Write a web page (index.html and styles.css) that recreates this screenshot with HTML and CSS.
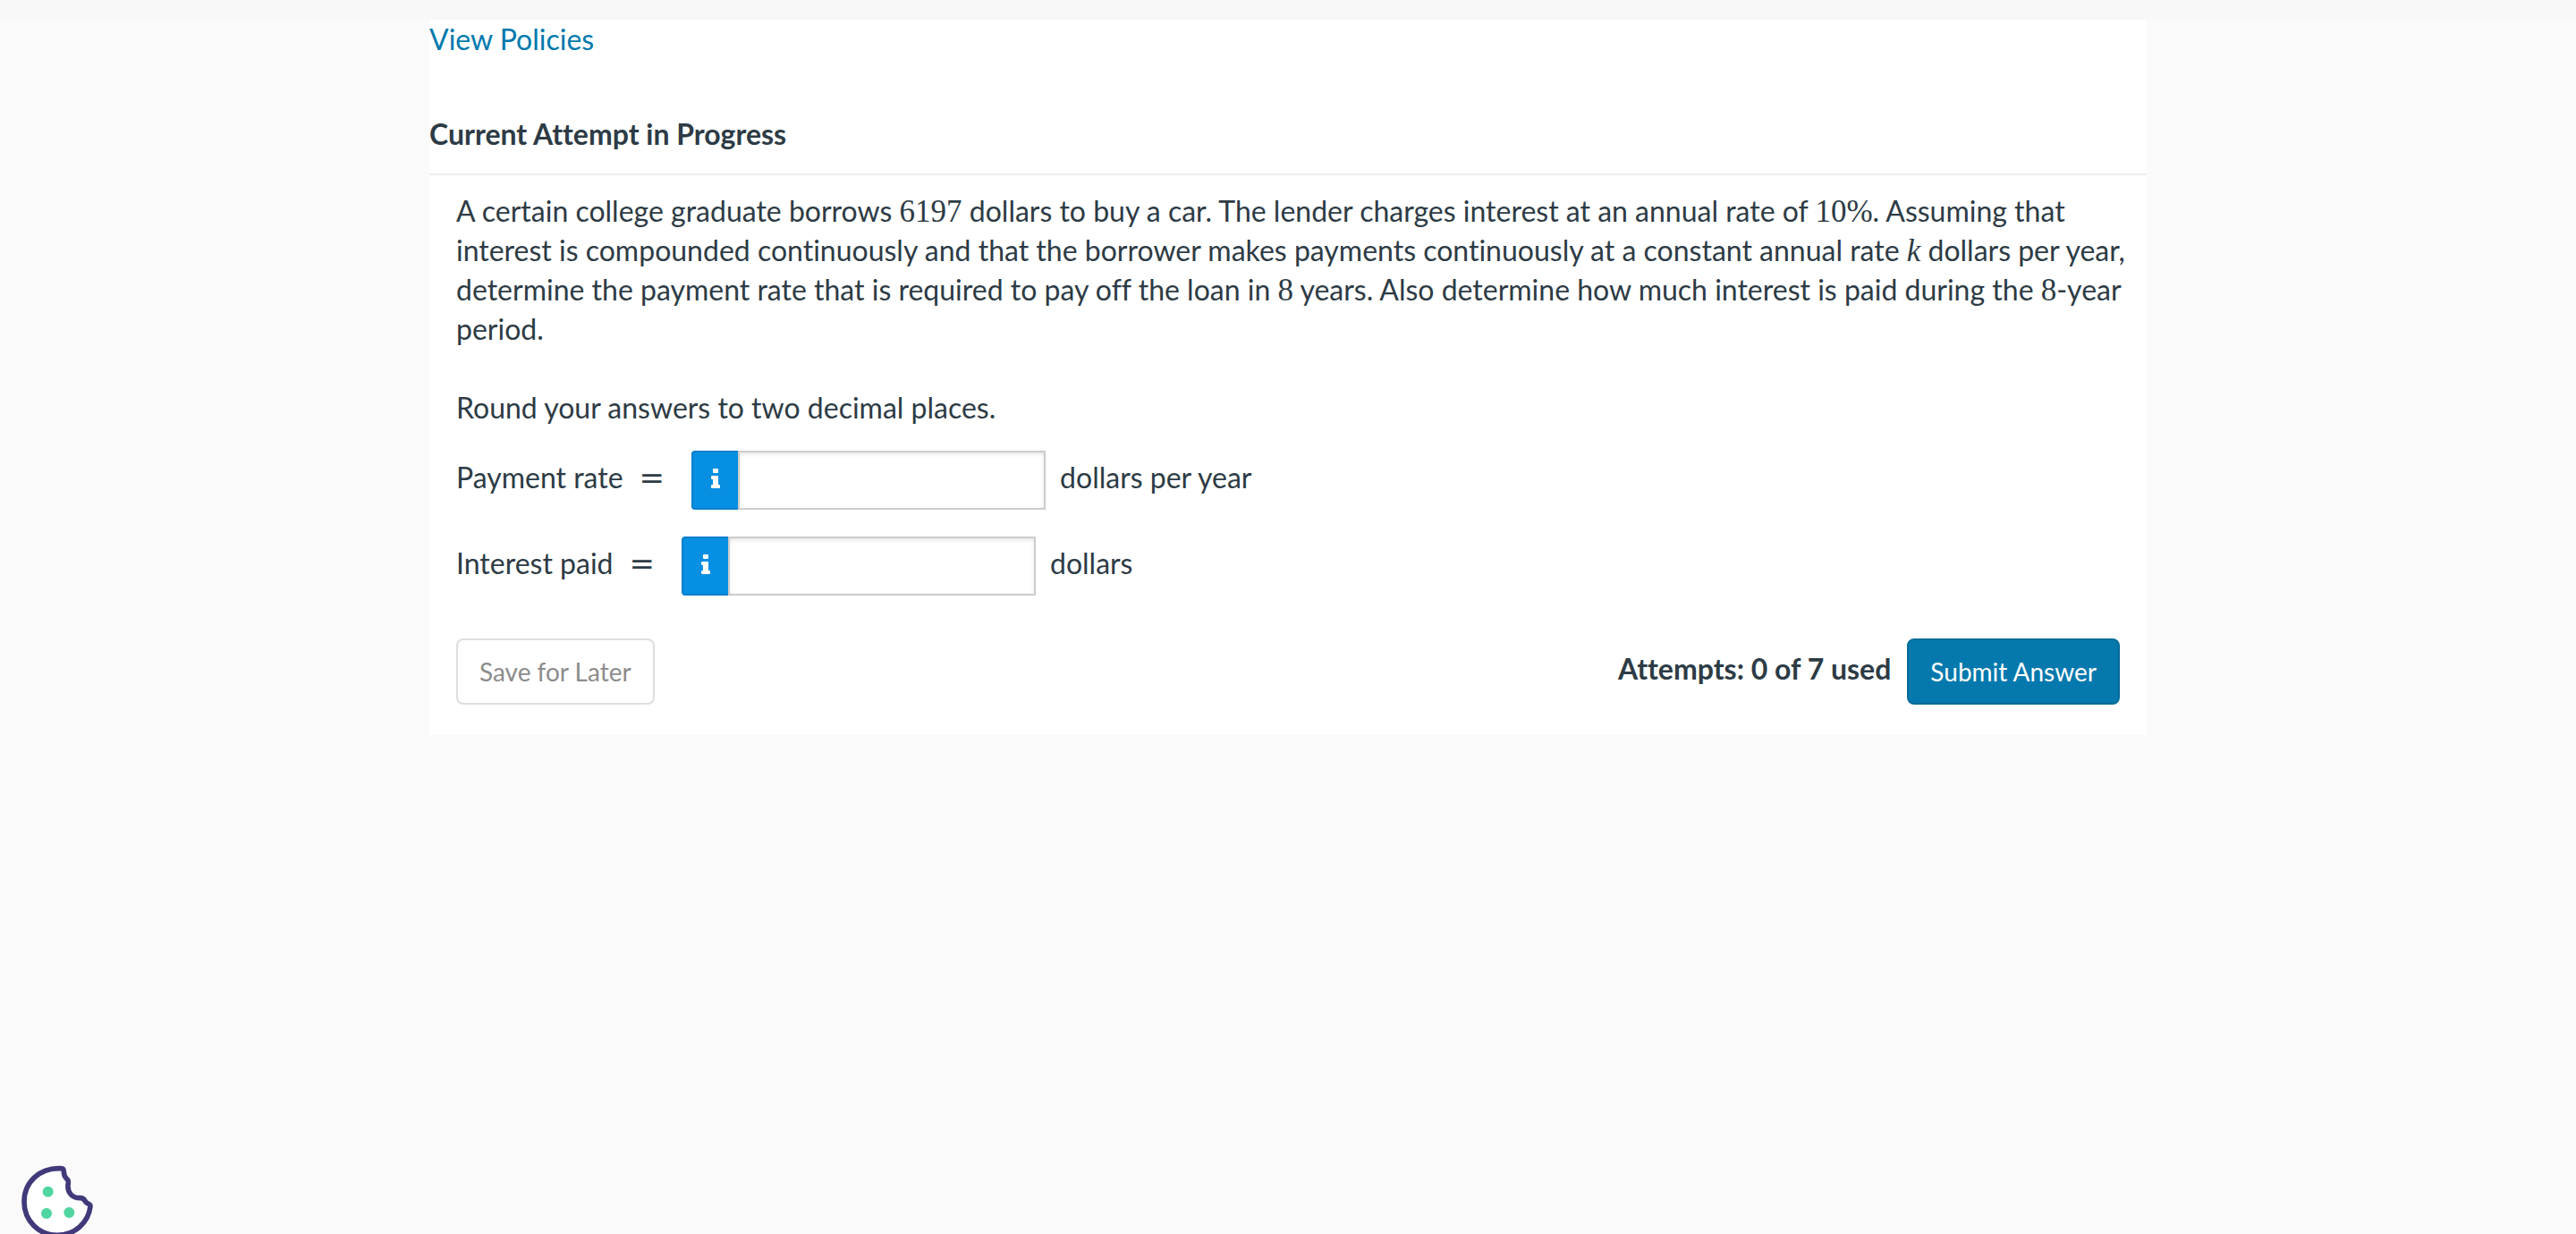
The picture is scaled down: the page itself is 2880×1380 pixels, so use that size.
FILE: index.html
```html
<!DOCTYPE html>
<html lang="en">
  <head>
    <meta charset="UTF-8" />
    <meta name="viewport" content="width=device-width, initial-scale=1.0" />
    <title>Current Attempt in Progress</title>
    <link rel="stylesheet" href="styles.css">
  </head>
  <body>
    <div class="topbar"></div>
    <main class="question">
      <a class="policies" href="#">View Policies</a>
      <h1 class="title">Current Attempt in Progress</h1>
      <form class="content">
        <p class="text">
          A certain college graduate borrows <span class="math">6197</span> dollars to buy a car. The lender charges
          interest at an annual rate of <span class="math">10%</span>. Assuming that interest is compounded
          continuously and that the borrower makes payments continuously at a constant annual rate
          <i class="math">k</i> dollars per year, determine the payment rate that is required to pay off the loan in
          <span class="math">8</span> years. Also determine how much interest is paid during the
          <span class="math">8</span>-year period.
        </p>
        <p class="text">Round your answers to two decimal places.</p>

        <div class="answer">
          <label for="rate">Payment rate</label>
          <span class="equals">=</span>
          <div class="field">
            <button class="info" type="button" aria-label="Answer format">
              <svg width="10" height="22" viewBox="0 0 10 22" fill="#fff">
                <rect x="2" y="0" width="6" height="5" rx="1" />
                <path d="M1 8h6q1 0 1 1v9h1q1 0 1 1v2q0 1-1 1H1q-1 0-1-1v-2q0-1 1-1h1v-6H1q-1 0-1-1V9q0-1 1-1z" />
              </svg>
            </button>
            <input class="input" id="rate" type="text">
          </div>
          <span>dollars per year</span>
        </div>

        <div class="answer">
          <label for="interest">Interest paid</label>
          <span class="equals">=</span>
          <div class="field">
            <button class="info" type="button" aria-label="Answer format">
              <svg width="10" height="22" viewBox="0 0 10 22" fill="#fff">
                <rect x="2" y="0" width="6" height="5" rx="1" />
                <path d="M1 8h6q1 0 1 1v9h1q1 0 1 1v2q0 1-1 1H1q-1 0-1-1v-2q0-1 1-1h1v-6H1q-1 0-1-1V9q0-1 1-1z" />
              </svg>
            </button>
            <input class="input" id="interest" type="text">
          </div>
          <span>dollars</span>
        </div>

        <div class="footer">
          <button class="button save" type="button">Save for Later</button>
          <div class="submit-group">
            <span class="attempts">Attempts: 0 of 7 used</span>
            <button class="button submit" type="submit">Submit Answer</button>
          </div>
        </div>
      </form>
    </main>

    <button class="cookie" aria-label="Cookie settings">
      <svg width="130" height="100" viewBox="0 0 390 300">
        <path d="M205 80C135 76 81 125 81 192C81 256 131 304 192 304C250 304 297 262 303 207Q303 202 297 199Q289 196 285 189Q280 179 269 179C243 180 226 162 228 136Q231 120 224 115Q214 106 214 91Q214 80 205 80Z" fill="#fff" stroke="#403a7a" stroke-width="17" stroke-linejoin="round" />
        <g fill="#50d4a0">
          <circle cx="161" cy="158" r="18" />
          <circle cx="156" cy="231" r="18" />
          <circle cx="232" cy="228" r="18" />
        </g>
      </svg>
    </button>
  </body>
</html>
```
FILE: styles.css
```css
* {
  box-sizing: border-box;
}
body {
  margin: 0;
  background-color: #fafafa;
  color: #2d3b45;
  font-family: Lato, "Liberation Sans", sans-serif;
  font-size: 32px;
  font-variant-ligatures: none;
  line-height: 44px;
}
.topbar {
  height: 22px;
  background-color: #f8f8f8;
}
.question {
  max-width: 1920px;
  margin: 0 auto;
  background-color: #fff;
}
.policies {
  color: #0079ad;
  text-decoration: none;
}
.title {
  margin: 0;
  padding: 62px 0 22px;
  border-bottom: 2px solid #eee;
  font-size: 32px;
  font-weight: 700;
}
.content {
  padding: 18px 30px 34px;
}
.text {
  margin: 0 -16px 44px 0;
}
.text + .text {
  margin-bottom: 26px;
}
/* numbers and variables */
.math {
  font-family: "Liberation Serif", serif;
  font-size: 35px;
  line-height: 1;
}
.answer {
  display: flex;
  margin-bottom: 30px;
  line-height: 60px;
}
.equals {
  margin: 0 30px 0 18px;
  font-family: "DejaVu Serif", serif;
  font-size: 34px;
}
.field {
  display: flex;
  height: 66px;
  margin-right: 16px;
}
.info {
  display: flex;
  align-items: center;
  justify-content: center;
  width: 52px;
  padding: 0 0 4px;
  background-color: #078fe2;
  border: 2px solid #067fca;
  border-right: 0;
  border-radius: 4px 0 0 4px;
}
.input {
  width: 344px;
  padding: 8px 12px;
  border: 2px solid #ccc;
  box-shadow: inset 0 2px 4px rgba(0, 0, 0, 0.1);
  font: inherit;
}
.footer {
  display: flex;
  justify-content: space-between;
  padding-top: 18px;
}
.submit-group {
  display: flex;
  gap: 18px;
}
.attempts {
  font-weight: 700;
  line-height: 68px;
}
.button {
  height: 74px;
  padding: 0 24px;
  border: 2px solid #dedede;
  border-radius: 8px;
  background-color: #fff;
  color: #8c8c8c;
  font-family: inherit;
  font-size: 28px;
}
.submit {
  border-color: #046b98;
  background-color: #0579ad;
  color: #fff;
}
.cookie {
  position: fixed;
  bottom: 0;
  left: 0;
  padding: 0;
  border: 0;
  background: none;
}
.cookie svg {
  display: block;
}
```
